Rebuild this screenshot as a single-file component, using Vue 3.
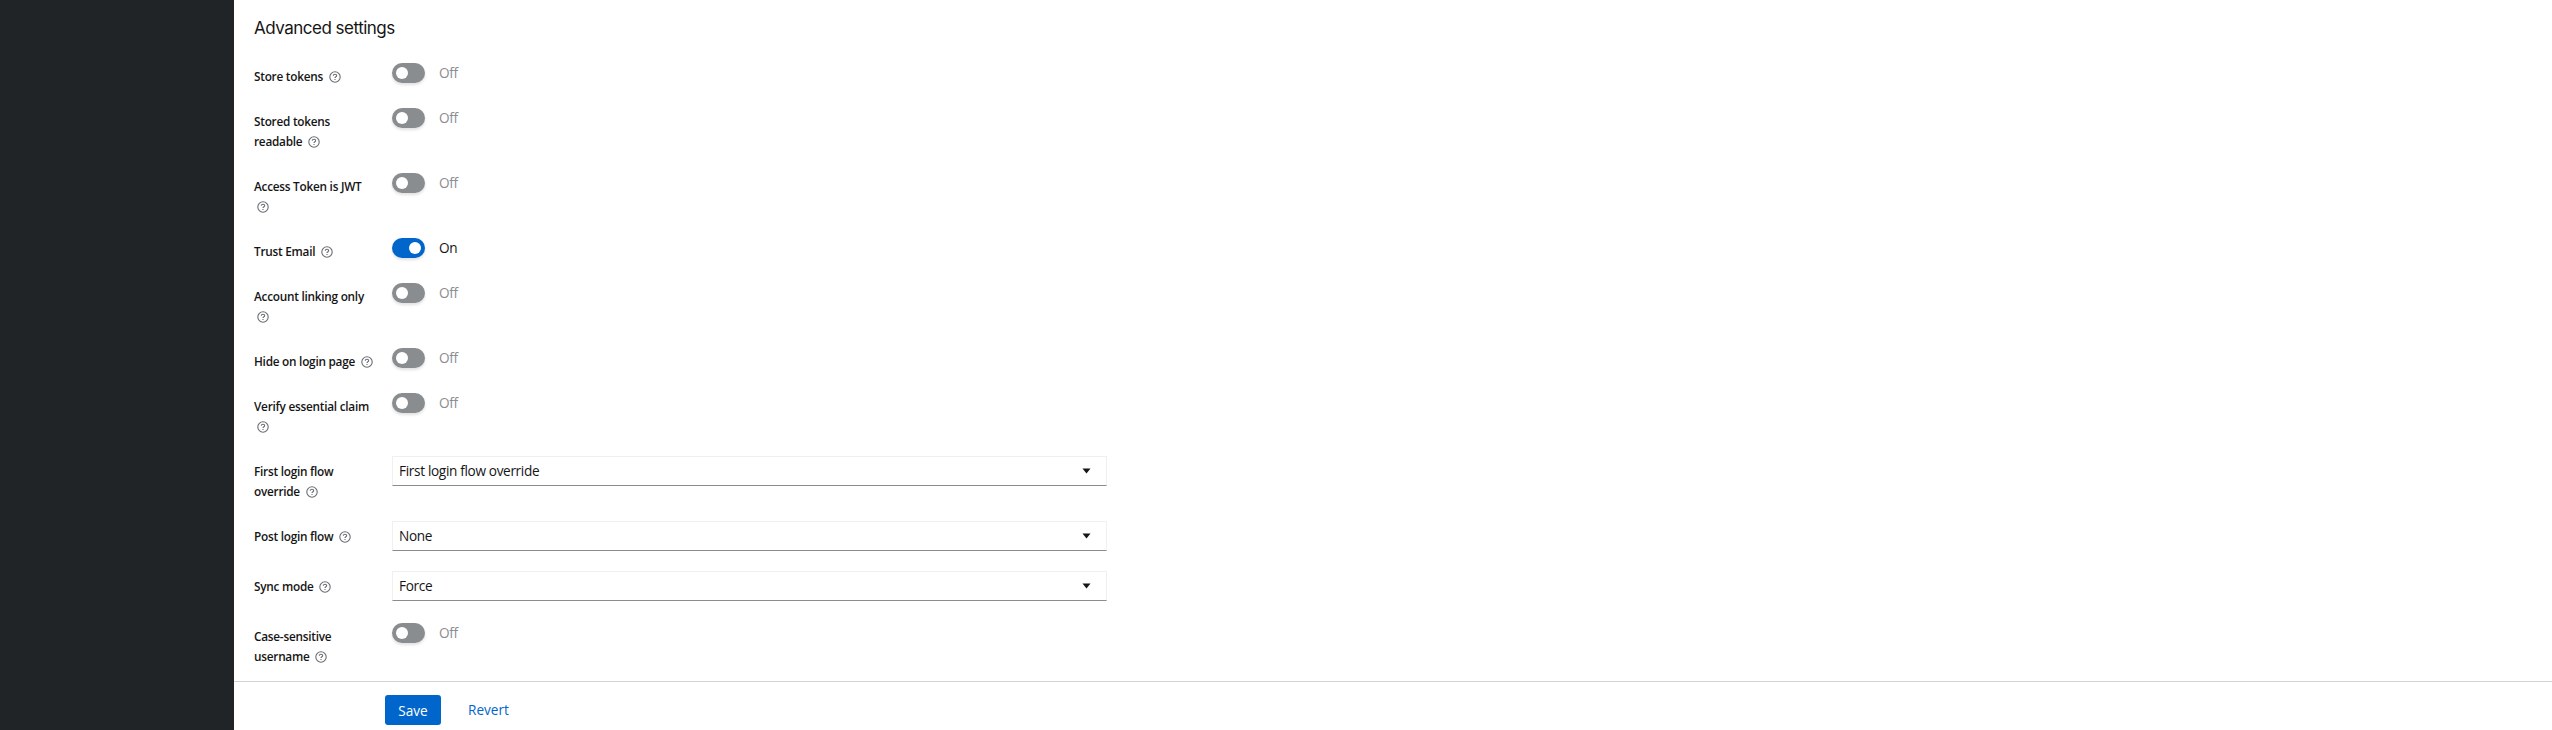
<script setup>
const rows = [
  { label: 'Store tokens', type: 'toggle', on: false },
  { label: 'Stored tokens readable', type: 'toggle', on: false },
  { label: 'Access Token is JWT', type: 'toggle', on: false },
  { label: 'Trust Email', type: 'toggle', on: true },
  { label: 'Account linking only', type: 'toggle', on: false },
  { label: 'Hide on login page', type: 'toggle', on: false },
  { label: 'Verify essential claim', type: 'toggle', on: false },
  { label: 'First login flow override', type: 'select', value: 'First login flow override' },
  { label: 'Post login flow', type: 'select', value: 'None' },
  { label: 'Sync mode', type: 'select', value: 'Force' },
  { label: 'Case-sensitive username', type: 'toggle', on: false },
]
</script>

<template>
  <div class="page">
    <aside class="sidebar"></aside>
    <main class="main">
      <section class="content">
        <h2 class="title">Advanced settings</h2>
        <div class="form">
          <template v-for="row in rows" :key="row.label">
            <div class="label">
              {{ row.label }}
              <span class="help">
                <svg viewBox="0 0 12 12" width="12" height="12" fill="none" stroke="#6a6e73">
                  <circle cx="6" cy="6" r="5.2" stroke-width="1.1" />
                  <path d="M4.3 4.8C4.3 3.8 5 3.2 6 3.2S7.7 3.8 7.7 4.7C7.7 5.7 6 5.9 6 7.1" stroke-width="1.1" />
                  <path d="M6 8v1.1" stroke-width="1.1" />
                </svg>
              </span>
            </div>
            <div v-if="row.type === 'toggle'" class="control">
              <span class="switch" :class="{ on: row.on }"><span class="knob"></span></span>
              <span class="state" :class="{ on: row.on }">{{ row.on ? 'On' : 'Off' }}</span>
            </div>
            <div v-else class="control-select">
              <div class="select">
                <span>{{ row.value }}</span>
                <svg class="caret" viewBox="0 0 9 6" width="9" height="6"><path d="M0.5 0.5h8L4.5 5.5z" fill="#151515" /></svg>
              </div>
            </div>
          </template>
        </div>
      </section>
      <footer class="footer">
        <button class="save">Save</button>
        <a class="revert">Revert</a>
      </footer>
    </main>
  </div>
</template>

<style>
html, body { margin: 0; padding: 0; background: #fff; overflow: hidden; }
</style>

<style scoped>
.page {
  display: flex;
  width: 2552px;
  height: 730px;
  overflow: hidden;
  font-family: "Open Sans", "Liberation Sans", sans-serif;
  color: #151515;
}
.sidebar { width: 234px; flex: none; background: #212427; }
.main { flex: 1; display: flex; flex-direction: column; min-width: 0; }
.content { flex: 1; padding: 0 20px; overflow: hidden; }
.title {
  margin: 0;
  padding-top: 16px;
  height: 61px;
  box-sizing: border-box;
  font-family: Inter, sans-serif;
  font-size: 17px;
  font-weight: 400;
  letter-spacing: -0.5px;
  line-height: 24px;
}
.form {
  display: grid;
  grid-template-columns: 120px 715px;
  column-gap: 18px;
  row-gap: 19px;
  align-items: start;
}
.label {
  padding: 5px 0 1px;
  font-size: 11.8px;
  font-weight: 600;
  letter-spacing: -0.25px;
  line-height: 20px;
}
.help { display: inline-block; padding-left: 3px; vertical-align: -2px; height: 12px; line-height: 0; }
.control { display: flex; align-items: flex-start; gap: 14px; padding-top: 2px; }
.switch {
  position: relative;
  width: 33px;
  height: 20px;
  border-radius: 10px;
  background: #8a8d90;
  box-shadow: 0 2px 3px rgba(0, 0, 0, 0.12);
}
.switch.on { background: #06c; }
.knob {
  position: absolute;
  top: 4px;
  left: 4px;
  width: 12px;
  height: 12px;
  border-radius: 50%;
  background: #fff;
}
.switch.on .knob { left: 17px; }
.state { font-size: 13.6px; letter-spacing: -0.3px; line-height: 19px; color: #8a8d90; }
.state.on { color: #151515; }
.control-select { min-height: 31px; }
.select {
  display: flex;
  align-items: center;
  justify-content: space-between;
  box-sizing: border-box;
  height: 30px;
  padding: 0 15px 1px 6px;
  border: 1px solid #f0f0f0;
  border-bottom-color: #8a8d90;
  font-size: 13.6px;
  letter-spacing: -0.33px;
}
.footer {
  display: flex;
  align-items: flex-start;
  flex: none;
  height: 49px;
  box-sizing: border-box;
  padding: 13px 0 0 151px;
  border-top: 1px solid #d2d2d2;
}
.save {
  width: 56px;
  height: 30px;
  padding: 0;
  border: 0;
  border-radius: 3px;
  background: #06c;
  color: #fff;
  font: 13.6px "Open Sans", sans-serif;
}
.revert { margin-left: 27px; font-size: 13.6px; line-height: 30px; color: #06c; }
</style>
